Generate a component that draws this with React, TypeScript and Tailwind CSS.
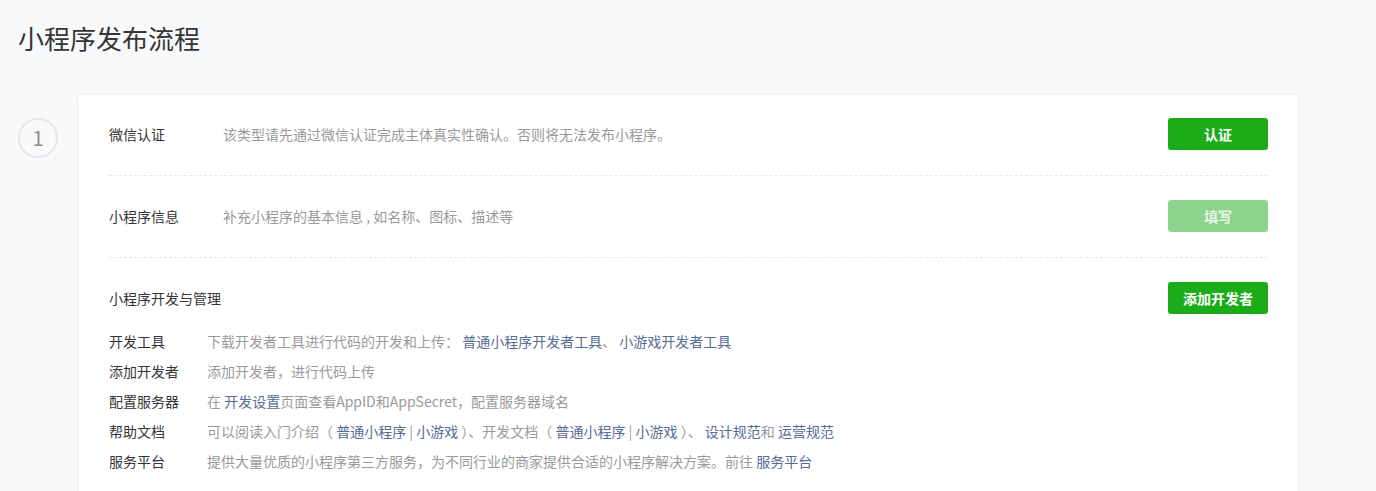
import React from 'react';

const font = { fontFamily: '"Noto Sans CJK SC", "Liberation Sans", sans-serif' };

function Link({ children }: { children: React.ReactNode }) {
  return <span className="text-[#576b95]">{children}</span>;
}

const devRows: { label: string; content: React.ReactNode }[] = [
  {
    label: '开发工具',
    content: (
      <>
        下载开发者工具进行代码的开发和上传： <Link>普通小程序开发者工具</Link>、 <Link>小游戏开发者工具</Link>
      </>
    ),
  },
  { label: '添加开发者', content: <>添加开发者，进行代码上传</> },
  {
    label: '配置服务器',
    content: (
      <>
        在 <Link>开发设置</Link>页面查看AppID和AppSecret，配置服务器域名
      </>
    ),
  },
  {
    label: '帮助文档',
    content: (
      <>
        可以阅读入门介绍（ <Link>普通小程序</Link> | <Link>小游戏</Link> ）、开发文档（ <Link>普通小程序</Link> |{' '}
        <Link>小游戏</Link> ）、 <Link>设计规范</Link>和 <Link>运营规范</Link>
      </>
    ),
  },
  {
    label: '服务平台',
    content: (
      <>
        提供大量优质的小程序第三方服务，为不同行业的商家提供合适的小程序解决方案。前往 <Link>服务平台</Link>
      </>
    ),
  },
];

export default function App() {
  return (
    <div className="min-h-screen bg-[#f8f9fb] text-[#353535]" style={font}>
      <div className="h-[491px] overflow-hidden">
        <h1 className="pl-[18px] pt-[20px] text-[26px] leading-[36px] text-[#353535]">小程序发布流程</h1>

        <div className="mt-[39px] flex">
          <div className="w-[79px] shrink-0 pl-[18px] pt-[23px]">
            <div className="flex h-[40px] w-[40px] items-center justify-center rounded-full border-2 border-[#e4e6e9] text-[20px] text-[#8d8d8d]">
              1
            </div>
          </div>

          <div className="w-[1219px] rounded-[4px] bg-white px-[30px] pt-[23px] pb-[30px] shadow-[0_0_4px_rgba(0,0,0,0.06)]">
            <div className="flex h-[32px] items-center text-[14px]">
              <div className="w-[114px] shrink-0 text-[#353535]">微信认证</div>
              <div className="flex-1 text-[#9a9a9a]">该类型请先通过微信认证完成主体真实性确认。否则将无法发布小程序。</div>
              <button className="h-[32px] w-[100px] rounded-[3px] bg-[#1aad19] text-[14px] font-bold text-white">认证</button>
            </div>
            <div className="mt-[25px] border-t border-dashed border-[#e7e7e7]" />

            <div className="mt-[24px] flex h-[32px] items-center text-[14px]">
              <div className="w-[114px] shrink-0 text-[#353535]">小程序信息</div>
              <div className="flex-1 text-[#9a9a9a]">补充小程序的基本信息 , 如名称、图标、描述等</div>
              <button className="h-[32px] w-[100px] rounded-[3px] bg-[#8cd48c] text-[14px] font-bold text-[#e8f6e8]">填写</button>
            </div>
            <div className="mt-[25px] border-t border-dashed border-[#e7e7e7]" />

            <div className="mt-[24px] flex h-[32px] items-center text-[14px]">
              <div className="flex-1 text-[#353535]">小程序开发与管理</div>
              <button className="h-[32px] w-[100px] rounded-[3px] bg-[#1aad19] text-[14px] font-bold text-white">添加开发者</button>
            </div>

            <div className="mt-[12px]">
              {devRows.map((row) => (
                <div key={row.label} className="flex h-[30px] items-center text-[14px]">
                  <div className="w-[98px] shrink-0 text-[#353535]">{row.label}</div>
                  <div className="text-[#9a9a9a]">{row.content}</div>
                </div>
              ))}
            </div>
          </div>
        </div>
      </div>
    </div>
  );
}
